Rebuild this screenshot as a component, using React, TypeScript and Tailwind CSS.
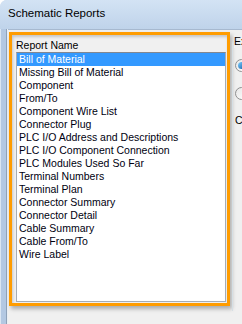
const reports = [
  "Bill of Material",
  "Missing Bill of Material",
  "Component",
  "From/To",
  "Component Wire List",
  "Connector Plug",
  "PLC I/O Address and Descriptions",
  "PLC I/O Component Connection",
  "PLC Modules Used So Far",
  "Terminal Numbers",
  "Terminal Plan",
  "Connector Summary",
  "Connector Detail",
  "Cable Summary",
  "Cable From/To",
  "Wire Label",
];

function Radio({ checked }: { checked?: boolean }) {
  return (
    <div className="flex h-[13px] w-[13px] shrink-0 items-center justify-center rounded-full border border-[#8f8f8f] bg-gradient-to-br from-[#e6e6e6] to-[#ffffff]">
      {checked && (
        <div className="h-[7px] w-[7px] rounded-full bg-gradient-to-br from-[#7fd0ff] to-[#0f5fa8]" />
      )}
    </div>
  );
}

export default function App() {
  return (
    <div className="relative h-[324px] w-[242px] overflow-hidden rounded-tl-[7px] bg-[#c2d5eb] font-['Liberation_Sans',Arial,sans-serif] text-black">
      <div className="flex h-[29px] items-center bg-gradient-to-b from-[#d3e3f4] to-[#bfd3ea] pl-[8px] pb-[1px] text-[11.5px]">
        Schematic Reports
      </div>

      <div className="flex h-[295px]">
        <div className="flex w-[8px] shrink-0">
          <div className="w-[1px] bg-[#dbe6f2]" />
          <div className="w-[5px] bg-[#b3c8e2]" />
          <div className="w-[1px] bg-[#8fa2b8]" />
          <div className="w-[1px] bg-[#e9eef4]" />
        </div>

        <div className="flex flex-1 border-t border-[#a7b9cf] bg-[#f0f0f0]">
          <div className="ml-[1px] mt-[2px] flex h-[274px] w-[221px] shrink-0 flex-col border-[3px] border-[#ff9c00] shadow-[2px_3px_4px_rgba(0,0,0,0.28)]">
            <div className="flex flex-1 flex-col pl-[4px] pr-[1px] pb-[1px] shadow-[inset_1px_2px_3px_rgba(0,0,0,0.18)]">
              <div className="h-[17px] pt-[4px] text-[10.5px] leading-[13px]">
                Report Name
              </div>
              <div className="flex-1 border border-[#a5acb5] border-t-[#828790] bg-white">
                {reports.map((r, i) => (
                  <div
                    key={r}
                    className={
                      i === 0
                        ? "h-[13px] whitespace-nowrap bg-[#3399ff] pl-[2px] text-[10.5px] leading-[13px] text-white"
                        : "h-[13px] whitespace-nowrap pl-[2px] text-[10.5px] leading-[13px] text-[#000010]"
                    }
                  >
                    {r}
                  </div>
                ))}
              </div>
            </div>
          </div>

          <div className="ml-[2px] flex flex-1 flex-col overflow-hidden">
            <div className="relative mt-[11px] h-[270px] rounded-tl-[3px] border-l border-t border-[#d5dfe5] pl-[2px]">
              <div className="absolute -top-[7px] left-[1px] bg-[#f0f0f0] text-[10.5px] leading-[13px]">
                Export
              </div>
              <div className="mt-[17px] flex items-center">
                <Radio checked />
              </div>
              <div className="mt-[15px] flex items-center">
                <Radio />
              </div>
              <div className="mt-[14px] text-[10.5px] leading-[13px]">
                Columns
              </div>
            </div>
          </div>
        </div>
      </div>
    </div>
  );
}
